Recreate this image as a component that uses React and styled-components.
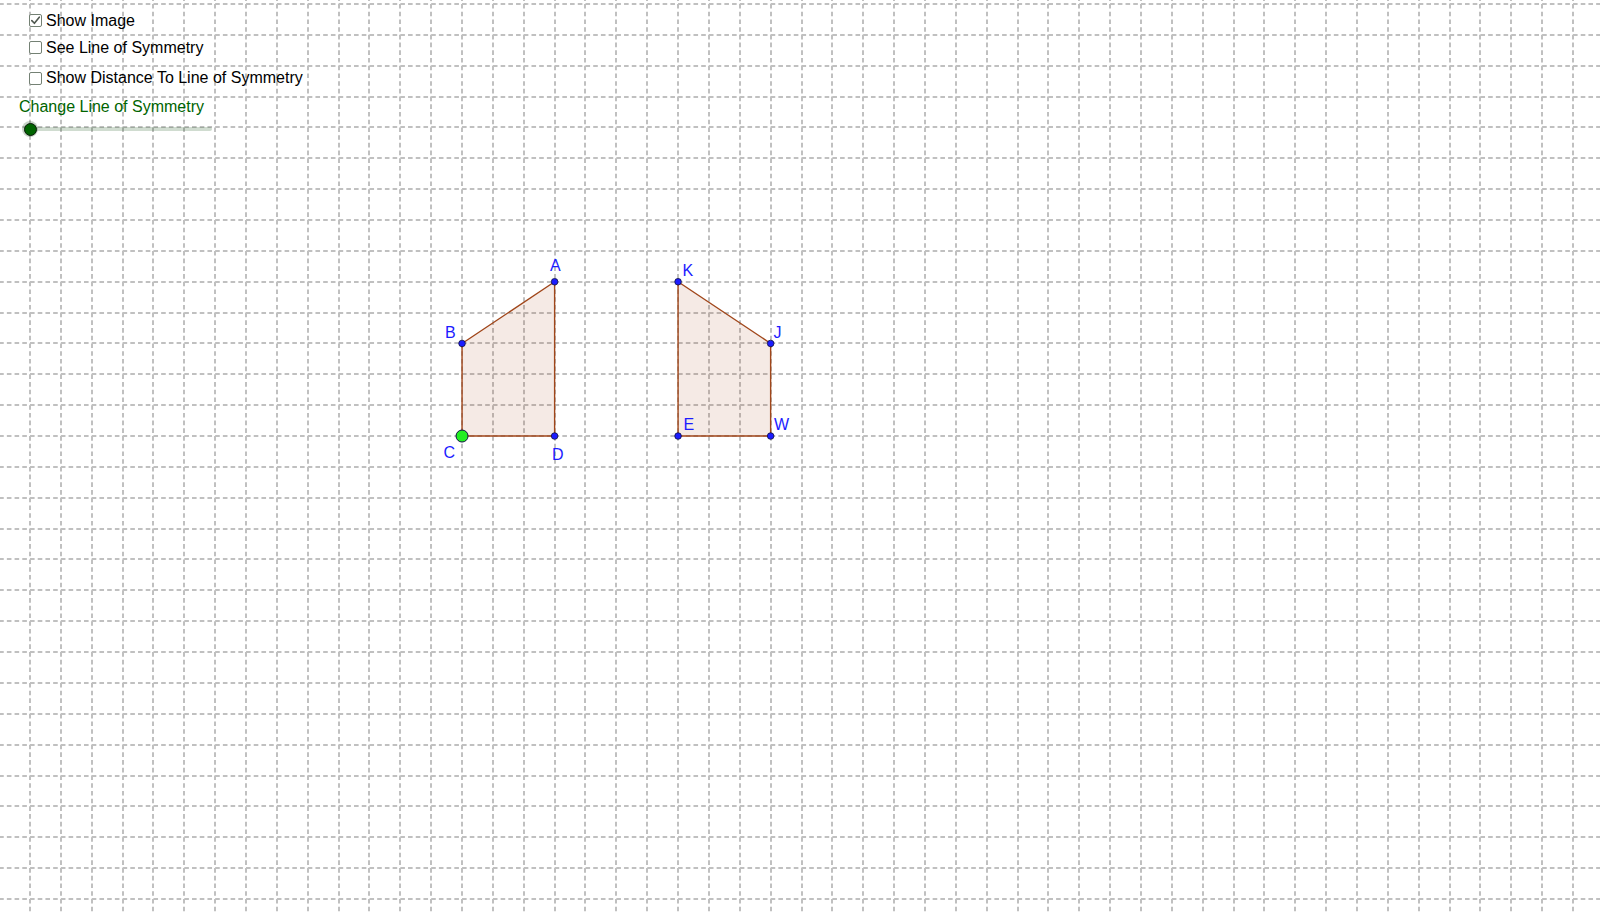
import React from 'react';
import styled, { createGlobalStyle } from 'styled-components';

const GlobalStyle = createGlobalStyle`
  html, body {
    margin: 0;
    padding: 0;
    background: #ffffff;
    overflow: hidden;
  }
  * {
    box-sizing: border-box;
  }
`;

const STEP = 30.86;
const X0 = 30;
const Y0 = 4;
const W = 1600;
const H = 913;

const gx = (k) => X0 + k * STEP;
const gy = (k) => Y0 + k * STEP;

const Applet = styled.div`
  position: relative;
  width: ${W}px;
  height: ${H}px;
  background: #ffffff;
  overflow: hidden;
  font-family: 'Liberation Sans', Arial, sans-serif;
`;

const GraphicsView = styled.svg`
  display: block;
  width: ${W}px;
  height: ${H}px;
`;

const Controls = styled.div`
  position: absolute;
  top: 0;
  left: 0;
  display: flex;
  flex-direction: column;
  padding-top: 11.5px;
`;

const CheckRow = styled.label`
  display: flex;
  align-items: center;
  gap: 4px;
  height: 18px;
  margin-top: ${(p) => p.gap || 0}px;
  padding-left: 29px;
  font-size: 16px;
  line-height: 18px;
  color: #000000;
  white-space: nowrap;
  cursor: pointer;
`;

const Box = styled.span`
  display: inline-flex;
  align-items: center;
  justify-content: center;
  width: 13px;
  height: 13px;
  border: 1.5px solid #748174;
  border-radius: 2px;
  background: #ffffff;
  flex-shrink: 0;
`;

const SliderCaption = styled.div`
  margin-top: ${(p) => p.gap || 0}px;
  padding-left: 19px;
  height: 18px;
  font-size: 16px;
  line-height: 18px;
  color: #006400;
  white-space: nowrap;
`;

const SliderRow = styled.div`
  display: flex;
  align-items: center;
  height: 18px;
  margin-top: ${(p) => p.gap || 0}px;
  padding-left: 30px;
`;

const Track = styled.div`
  position: relative;
  width: 182px;
  height: 4px;
  border-radius: 2px;
  background: rgba(20, 80, 20, 0.2);
`;

const Knob = styled.span`
  position: absolute;
  left: -8px;
  top: -6px;
  width: 16px;
  height: 16px;
  border-radius: 50%;
  background: rgba(0, 60, 0, 0.22);
  display: flex;
  align-items: center;
  justify-content: center;

  &::after {
    content: '';
    width: 11px;
    height: 11px;
    border-radius: 50%;
    background: #006400;
    border: 1px solid #0a1a0a;
  }
`;

const CheckMark = () => (
  <svg width="11" height="11" viewBox="0 0 11 11">
    <path d="M1.8 5.6 L4.4 8.3 L9.3 2.2" fill="none" stroke="#505850" strokeWidth="1.6" strokeLinecap="round" strokeLinejoin="round" />
  </svg>
);

const Checkbox = ({ checked, label, gap }) => (
  <CheckRow gap={gap}>
    <Box>{checked && <CheckMark />}</Box>
    {label}
  </CheckRow>
);

const polygons = [
  [[17, 9], [14, 11], [14, 14], [17, 14]],
  [[21, 9], [24, 11], [24, 14], [21, 14]],
];

const points = [
  { k: [17, 9], name: 'A', lx: 550, ly: 271 },
  { k: [14, 11], name: 'B', lx: 445, ly: 338 },
  { k: [14, 14], name: 'C', lx: 443.5, ly: 458 },
  { k: [17, 14], name: 'D', lx: 552, ly: 460 },
  { k: [21, 9], name: 'K', lx: 682.5, ly: 276 },
  { k: [24, 11], name: 'J', lx: 773.5, ly: 337.5 },
  { k: [21, 14], name: 'E', lx: 683.5, ly: 430 },
  { k: [24, 14], name: 'W', lx: 774, ly: 430 },
];

const FREE_POINT = 'C';
const dash = `${4.6} ${STEP / 4 - 4.6}`;

// grid lines sit on whole pixels so the 2px dashes stay crisp
const Grid = () => {
  const cols = [];
  for (let k = 0; gx(k) < W; k++) cols.push(Math.round(gx(k)));
  const rows = [];
  for (let k = 0; gy(k) < H; k++) rows.push(Math.round(gy(k)));
  return (
    <g stroke="#c0c0c0" strokeWidth="2" strokeDasharray={dash}>
      {rows.map((y) => (
        <line key={`h${y}`} x1={X0 - STEP} y1={y} x2={W} y2={y} />
      ))}
      {cols.map((x) => (
        <line key={`v${x}`} x1={x} y1={Y0 - STEP} x2={x} y2={H} />
      ))}
    </g>
  );
};

export default function App() {
  return (
    <>
      <GlobalStyle />
      <Applet>
        <GraphicsView viewBox={`0 0 ${W} ${H}`}>
          <Grid />
          {polygons.map((poly, i) => (
            <polygon
              key={i}
              points={poly.map(([a, b]) => `${gx(a)},${gy(b)}`).join(' ')}
              fill="rgba(153, 51, 0, 0.1)"
              stroke="#a0461a"
              strokeWidth="1.4"
              strokeLinejoin="round"
            />
          ))}
          {points.map((p) => {
            const free = p.name === FREE_POINT;
            return (
              <g key={p.name}>
                <circle
                  cx={gx(p.k[0])}
                  cy={gy(p.k[1])}
                  r={free ? 6 : 3.3}
                  fill={free ? '#22ee22' : '#1c1cff'}
                  stroke="#101040"
                  strokeWidth={free ? 1 : 0.8}
                />
                <text
                  x={p.lx}
                  y={p.ly}
                  fill="#1c1cff"
                  fontSize="16"
                  fontFamily="'Liberation Sans', Arial, sans-serif"
                >
                  {p.name}
                </text>
              </g>
            );
          })}
        </GraphicsView>
        <Controls>
          <Checkbox checked label="Show Image" />
          <Checkbox label="See Line of Symmetry" gap={9} />
          <Checkbox label="Show Distance To Line of Symmetry" gap={12.5} />
          <SliderCaption gap={11}>Change Line of Symmetry</SliderCaption>
          <SliderRow gap={4}>
            <Track>
              <Knob />
            </Track>
          </SliderRow>
        </Controls>
      </Applet>
    </>
  );
}
